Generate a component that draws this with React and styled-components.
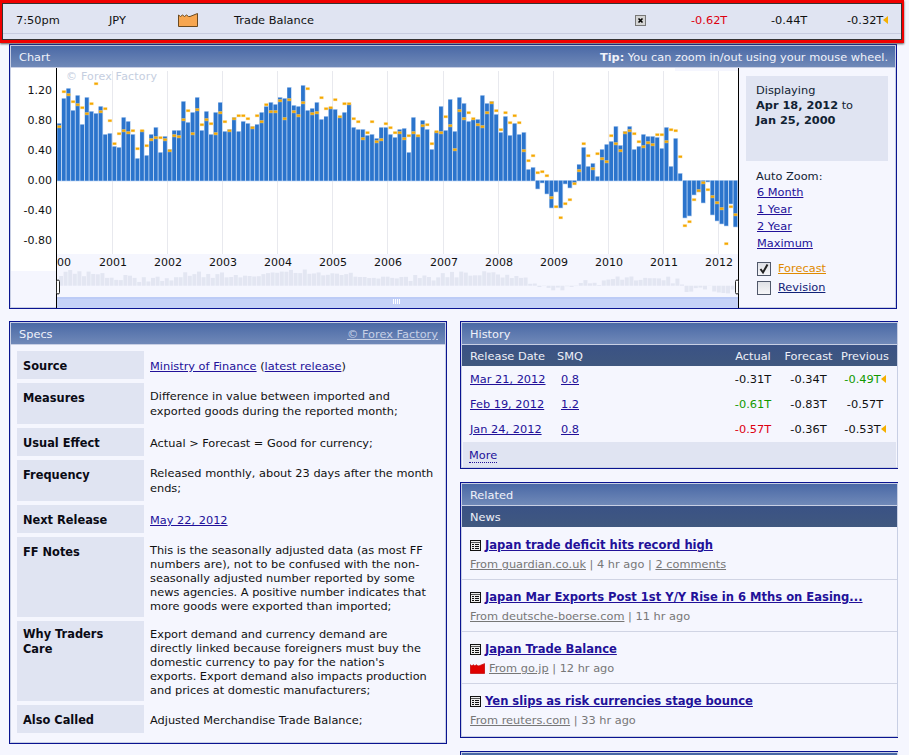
import styled, { createGlobalStyle } from "styled-components";

const GlobalStyle = createGlobalStyle`
  html, body {
    margin: 0;
    height: 755px;
    overflow: hidden;
    background: #f5f6fe;
    font-family: "DejaVu Sans", Verdana, sans-serif;
    font-size: 11.35px;
    color: #111;
  }
  b { font-size: 11.35px; }
`;

// pixels above the zero line, one per month
const actual = [57,82,92,70,85,56,83,69,67,74,46,47,34,33,63,59,46,22,50,25,46,53,28,44,31,50,50,79,58,68,83,50,69,46,68,78,49,51,63,49,59,57,54,56,68,74,78,76,83,82,93,75,74,95,70,72,78,61,64,73,71,63,68,76,53,51,51,45,46,42,53,53,46,43,51,52,28,63,45,60,51,31,49,74,50,81,49,83,77,59,61,61,85,77,79,66,48,64,45,57,46,48,11,13,-8,-2,-13,-27,-11,-27,-3,-7,-2,16,33,14,17,4,31,36,39,54,35,49,54,31,34,46,44,44,43,32,53,14,42,7,-37,-35,-14,-11,-22,-1,-34,-40,-43,-45,-23,-46];
const forecast = [54,89,86,79,76,73,67,77,97,69,72,60,37,47,50,48,50,32,50,35,41,43,43,41,30,45,44,61,70,47,71,56,61,57,47,68,59,50,62,65,65,62,53,65,59,76,69,69,80,62,81,69,65,78,92,67,68,83,72,73,81,64,77,77,62,59,42,48,59,39,41,57,53,48,48,42,45,48,45,55,56,37,49,48,64,55,31,70,62,68,62,56,54,68,78,70,51,68,58,65,58,30,20,25,8,9,5,-17,-26,-37,-23,-19,-3,10,37,25,12,27,22,19,45,37,30,48,50,47,39,34,38,36,46,46,39,51,50,24,-45,-41,-19,-10,-2,-9,-16,-22,-28,-63,-26,-34];

const yLabels = [["1.20",90],["0.80",120],["0.40",150],["0.00",180],["-0.40",210],["-0.80",240]];
const years = [[2001,112.5],[2002,167.5],[2003,222.5],[2004,277.5],[2005,332.5],[2006,387.5],[2007,443.5],[2008,498.5],[2009,553.5],[2010,608.5],[2011,663.5],[2012,718.5]];

const Page = styled.div`
  width: 909px;
  height: 755px;
  overflow: hidden;
`;

const EventRow = styled.div`
  box-sizing: border-box;
  width: 904px;
  height: 43px;
  border: 3px solid #f00000;
  border-left-width: 2px;
  border-right-width: 2px;
  box-shadow: inset 0 0 0 1px #333, 0 1px 2px #555;
  background: linear-gradient(#e0e4f2 0 30px, #c8cce0 30px 31px, #e0e4f2 31px);
  display: grid;
  grid-template-columns: 93px 69px 56px 401px 56px 80px 76px auto;
  align-items: center;
  padding: 0 0 3px 14px;
  position: relative;
  z-index: 1;
`;

const Num = styled.span`
  color: ${(p) => p.$color || "#111"};
  white-space: nowrap;
`;

const Triangle = styled.i`
  display: inline-block;
  width: 0;
  height: 0;
  margin-left: 0;
  vertical-align: 0;
  border-top: 4px solid transparent;
  border-bottom: 4px solid transparent;
  border-right: 5px solid #f5b000;
`;

const Panel = styled.section`
  box-sizing: border-box;
  border: 1px solid #0a1490;
  border-right: ${(p) => (p.$open ? "none" : "1px solid #0a1490")};
  box-shadow: inset 0 0 0 1px #c8cfe4;
  padding: 1px;
`;

const ChartPanel = styled(Panel)`
  width: 888px;
  height: 265px;
  margin: 1px 0 0 9px;
`;

const TitleBar = styled.div`
  box-sizing: border-box;
  height: 21px;
  line-height: 21px;
  padding: 1px 7px 0 8px;
  margin-bottom: 1px;
  background: linear-gradient(#4a69a6, #7089b8);
  color: #f0f2fa;
  display: flex;
  justify-content: space-between;
  box-shadow: 0 1px 0 #c8cfe4;
  a { color: #c6d0e6; }
  b { font-weight: 700; }
`;

const SubBar = styled.div`
  box-sizing: border-box;
  height: 21px;
  line-height: 21px;
  padding: 1px 0 0 8px;
  margin-bottom: 1px;
  background: linear-gradient(#3a5285, #40587f);
  color: #eef0f8;
`;

const ChartBody = styled.div`
  display: flex;
  height: 240px;
`;

const ChartSvg = styled.svg`
  display: block;
  flex: none;
  text {
    font-family: "DejaVu Sans", Verdana, sans-serif;
    font-size: 11px;
    fill: #111;
  }
`;

const Side = styled.div`
  flex: 1;
  padding: 8px 0 0 7px;
  line-height: 15px;
  color: #123;
`;

const DisplayBox = styled.div`
  width: 142px;
  height: 85px;
  box-sizing: border-box;
  background: #e0e4f2;
  padding: 7px 10px;
  line-height: 15px;
`;

const AutoZoomLabel = styled.div`
  margin: 8px 0 1px 10px;
  line-height: 15px;
`;

const ZoomLinks = styled.div`
  margin: 0 0 8px 11px;
  display: flex;
  flex-direction: column;
  gap: 2px;
  a { line-height: 15px; width: fit-content; }
`;

const Link = styled.a`
  color: ${(p) => p.$color || "#221199"};
  text-decoration: underline;
`;

const CheckRow = styled.div`
  display: flex;
  align-items: center;
  gap: 7px;
  height: 19px;
  margin-left: 11px;
`;

const Box = styled.span`
  box-sizing: border-box;
  width: 14px;
  height: 14px;
  border: 1px solid #50586a;
  background: linear-gradient(#dfe1e6, #f6f6f8);
  display: flex;
  align-items: center;
  justify-content: center;
`;

const Columns = styled.div`
  display: grid;
  grid-template-columns: 438px 438px;
  column-gap: 13px;
  margin: 12px 0 0 9px;
  align-items: start;
`;

const RightCol = styled.div`
  display: flex;
  flex-direction: column;
  gap: 13px;
`;

const SpecList = styled.div`
  display: flex;
  flex-direction: column;
  gap: 4px;
  padding: 6px 0 9px 6px;
`;

const SpecRow = styled.div`
  display: grid;
  grid-template-columns: 127px 1fr;
  column-gap: 6px;
`;

const SpecLabel = styled.div`
  background: #e0e4f2;
  padding: ${(p) => (p.$high ? "6px" : "8px")} 6px 5px;
  line-height: 15px;
  font-weight: 700;
  font-size: 11.4px;
  color: #0a0a14;
`;

const SpecValue = styled.div`
  padding: ${(p) => (p.$multi ? "6px" : "8px")} 0 5px;
  line-height: ${(p) => (p.$tight ? "14px" : "15px")};
  padding-bottom: ${(p) => (p.$tight ? "4px" : "5px")};
  white-space: nowrap;
`;

const HistGrid = styled.div`
  box-sizing: border-box;
  display: grid;
  grid-template-columns: 87px 26px 142px 56px 55px 58px;
  padding: 1px 0 0 8px;
  height: ${(p) => p.$height}px;
  align-items: center;
  background: ${(p) => (p.$head ? "linear-gradient(#3a5285, #40587f)" : "transparent")};
  color: ${(p) => (p.$head ? "#eef0f8" : "#111")};
`;

const Cell = styled.span`
  grid-column: ${(p) => p.$col};
  text-align: ${(p) => (p.$left ? "left" : "center")};
  white-space: nowrap;
`;

const MoreBar = styled.div`
  box-sizing: border-box;
  height: 25px;
  line-height: 25px;
  margin: 1px 1px 0;
  padding: 1px 0 0 6px;
  background: #e0e4f2;
  a {
    color: #221199;
    text-decoration: none;
    border-bottom: 1px dotted #221199;
  }
`;

const NewsItem = styled.div`
  height: 52px;
  box-sizing: border-box;
  padding: 10px 0 0 8px;
  border-bottom: 1px solid ${(p) => (p.$last ? "transparent" : "#d0d4e4")};
`;

const NewsTitle = styled.div`
  display: flex;
  align-items: center;
  gap: 4px;
  height: 15px;
  line-height: 15px;
  a {
    color: #221199;
    font-weight: 700;
    font-size: 11.55px;
    text-decoration: underline;
  }
`;

const NewsMeta = styled.div`
  display: flex;
  align-items: center;
  gap: 4px;
  height: 15px;
  line-height: 15px;
  margin-top: 4px;
  color: #777;
  white-space: pre;
  a {
    color: #777;
    text-decoration: underline;
  }
`;

const NextPanel = styled(Panel)`
  height: 40px;
  background: #4a69a6;
`;

const Factory = ({ fill, stroke, width, height }) => (
  <svg width={width} height={height} viewBox="0 0 20 14">
    <path d="M.5 13.5V2l2 1.5L4.5 2l2 1.5L8.5 2l2 1.5 1.5 0 7.5-3V13.5Z" fill={fill} stroke={stroke} />
  </svg>
);

const CloseIcon = () => (
  <svg width="11" height="11" viewBox="0 0 11 11">
    <rect x=".5" y=".5" width="10" height="10" fill="#d4d4d4" stroke="#777" />
    <path d="M3.5 3.5l4 4M7.5 3.5l-4 4" stroke="#000" strokeWidth="1.6" />
  </svg>
);

const NewsIcon = () => (
  <svg width="11" height="11" viewBox="0 0 11 11">
    <rect x=".5" y=".5" width="10" height="10" fill="#eee" stroke="#111" />
    <path d="M1 2.5h9" stroke="#555" />
    <path d="M2 4.5h2M5 4.5h4M2 6.5h2M5 6.5h4M2 8.5h2M5 8.5h4" stroke="#111" />
  </svg>
);

const Chart = () => (
  <ChartSvg width="728" height="240" viewBox="11 68 728 240">
    <rect x="11" y="68" width="46" height="203" fill="#fff" />
    <rect x="57" y="68" width="681" height="186" fill="#fff" />
    <rect x="675" y="68" width="63" height="3" fill="#f5f6fe" />
    {years.map(([y, x]) => (
      <rect key={y} x={x - 0.5} y="71" width="1" height="183" fill="#e8e9ee" />
    ))}
    <text x="66" y="80" letterSpacing="0.2" style={{ fill: "#c5cee0" }}>© Forex Factory</text>
    {actual.map((h, i) => {
      const x = 57.3 + i * 4.6;
      const top = h > 0 ? 180.7 - h : 180.7;
      const size = Math.abs(h);
      return (
        <g key={i}>
          <rect x={x - 0.2} y={top - 0.6} width="4.6" height={size + 1.2} fill="#b5d0f1" />
          <rect x={x} y={top} width="3.7" height={size} fill="#2b74cc" />
        </g>
      );
    })}
    {forecast.map((h, i) => {
      const x = 57.6 + i * 4.6;
      return (
        <g key={i}>
          <rect x={x - 0.5} y={179.2 - h} width="4.4" height="3" fill="#fbd98f" opacity="0.7" />
          <rect x={x} y={179.7 - h} width="3.4" height="2" fill="#f5a800" />
        </g>
      );
    })}
    {actual.map((h, i) => (
      <rect
        key={i}
        x={59 + i * 4.6}
        y={h > 0 ? 285.7 - h * 0.17 : 285.7}
        width="4"
        height={Math.abs(h) * 0.17}
        fill="#e3e6f2"
      />
    ))}
    <rect x="57" y="297" width="681" height="11" fill="#c5d2f8" />
    <rect x="57" y="297" width="681" height="2" fill="#bccbf6" />
    <path d="M393.5 299v5M395.5 299v5M397.5 299v5M399.5 299v5" stroke="#fff" />
    {yLabels.map(([t, y]) => (
      <text key={t} x="52" y={y + 4} textAnchor="end">{t}</text>
    ))}
    <text x="57" y="266">00</text>
    {years.map(([y, x]) => (
      <text key={y} x={x + 0.5} y="266" textAnchor="middle">{y}</text>
    ))}
    <rect x="56" y="68" width="1" height="240" fill="#000" />
    <rect x="738" y="68" width="1" height="240" fill="#000" />
    <rect x="56.5" y="280" width="3" height="14" rx="1.5" fill="#fff" stroke="#222" />
    <rect x="735.5" y="280" width="3" height="14" rx="1.5" fill="#fff" stroke="#222" />
  </ChartSvg>
);

const history = [
  { date: "Mar 21, 2012", smq: "0.8", act: "-0.31T", fc: "-0.34T", prev: "-0.49T", prevColor: "#119900", tri: true },
  { date: "Feb 19, 2012", smq: "1.2", act: "-0.61T", actColor: "#119900", fc: "-0.83T", prev: "-0.57T" },
  { date: "Jan 24, 2012", smq: "0.8", act: "-0.57T", actColor: "#dd0011", fc: "-0.36T", prev: "-0.53T", tri: true },
];

const specs = [
  { label: "Measures", multi: true, text: ["Difference in value between imported and", "exported goods during the reported month;"] },
  { label: "Usual Effect", text: ["Actual > Forecast = Good for currency;"] },
  { label: "Frequency", multi: true, text: ["Released monthly, about 23 days after the month", "ends;"] },
];

const specsLong = [
  { label: "FF Notes", text: ["This is the seasonally adjusted data (as most FF", "numbers are), not to be confused with the non-", "seasonally adjusted number reported by some", "news agencies. A positive number indicates that", "more goods were exported than imported;"] },
  { label: <>Why Traders<br />Care</>, high: true, text: ["Export demand and currency demand are", "directly linked because foreigners must buy the", "domestic currency to pay for the nation's", "exports. Export demand also impacts production", "and prices at domestic manufacturers;"] },
];

const news = [
  { title: "Japan trade deficit hits record high", from: "From guardian.co.uk", rest: " | 4 hr ago | ", extra: "2 comments" },
  { title: "Japan Mar Exports Post 1st Y/Y Rise in 6 Mths on Easing...", from: "From deutsche-boerse.com", rest: " | 11 hr ago" },
  { title: "Japan Trade Balance", from: "From go.jp", rest: " | 12 hr ago", factory: true },
  { title: "Yen slips as risk currencies stage bounce", from: "From reuters.com", rest: " | 33 hr ago", last: true },
];

const Lines = ({ text }) => text.map((t, i) => <div key={i}>{t}</div>);

export default function App() {
  return (
    <Page>
      <GlobalStyle />
      <EventRow>
        <span>7:50pm</span>
        <span>JPY</span>
        <Factory fill="#f7a650" stroke="#6b4a20" width="20" height="14" />
        <span>Trade Balance</span>
        <CloseIcon />
        <Num $color="#dd0011">-0.62T</Num>
        <Num>-0.44T</Num>
        <Num>-0.32T<Triangle /></Num>
      </EventRow>

      <ChartPanel>
        <TitleBar>
          <span>Chart</span>
          <span><b>Tip:</b> You can zoom in/out using your mouse wheel.</span>
        </TitleBar>
        <ChartBody>
          <Chart />
          <Side>
            <DisplayBox>
              Displaying<br />
              <b>Apr 18, 2012</b> to<br />
              <b>Jan 25, 2000</b>
            </DisplayBox>
            <AutoZoomLabel>Auto Zoom:</AutoZoomLabel>
            <ZoomLinks>
              <Link>6 Month</Link>
              <Link>1 Year</Link>
              <Link>2 Year</Link>
              <Link>Maximum</Link>
            </ZoomLinks>
            <CheckRow>
              <Box>
                <svg width="12" height="12" viewBox="0 0 12 12">
                  <path d="M2.5 6l2.5 3.5L9.5 1.5" fill="none" stroke="#222" strokeWidth="2" />
                </svg>
              </Box>
              <Link $color="#e08a00">Forecast</Link>
            </CheckRow>
            <CheckRow>
              <Box />
              <Link $color="#112277">Revision</Link>
            </CheckRow>
          </Side>
        </ChartBody>
      </ChartPanel>

      <Columns>
        <Panel>
          <TitleBar>
            <span>Specs</span>
            <a href="#ff">© Forex Factory</a>
          </TitleBar>
          <SpecList>
            <SpecRow>
              <SpecLabel>Source</SpecLabel>
              <SpecValue>
                <Link>Ministry of Finance</Link> (<Link>latest release</Link>)
              </SpecValue>
            </SpecRow>
            {specs.map((s) => (
              <SpecRow key={s.label}>
                <SpecLabel>{s.label}</SpecLabel>
                <SpecValue $multi={s.multi}><Lines text={s.text} /></SpecValue>
              </SpecRow>
            ))}
            <SpecRow>
              <SpecLabel>Next Release</SpecLabel>
              <SpecValue><Link>May 22, 2012</Link></SpecValue>
            </SpecRow>
            {specsLong.map((s, i) => (
              <SpecRow key={i}>
                <SpecLabel $high={s.high}>{s.label}</SpecLabel>
                <SpecValue $multi $tight><Lines text={s.text} /></SpecValue>
              </SpecRow>
            ))}
            <SpecRow>
              <SpecLabel>Also Called</SpecLabel>
              <SpecValue>Adjusted Merchandise Trade Balance;</SpecValue>
            </SpecRow>
          </SpecList>
        </Panel>

        <RightCol>
          <Panel $open>
            <TitleBar><span>History</span></TitleBar>
            <HistGrid $head $height={21}>
              <Cell $col={1} $left>Release Date</Cell>
              <Cell $col={2}>SMQ</Cell>
              <Cell $col={4}>Actual</Cell>
              <Cell $col={5}>Forecast</Cell>
              <Cell $col={6}>Previous</Cell>
            </HistGrid>
            {history.map((r) => (
              <HistGrid key={r.date} $height={25}>
                <Cell $col={1} $left><Link>{r.date}</Link></Cell>
                <Cell $col={2}><Link>{r.smq}</Link></Cell>
                <Cell $col={4}><Num $color={r.actColor}>{r.act}</Num></Cell>
                <Cell $col={5}>{r.fc}</Cell>
                <Cell $col={6}>
                  <Num $color={r.prevColor}>{r.prev}</Num>
                  {r.tri && <Triangle />}
                </Cell>
              </HistGrid>
            ))}
            <MoreBar><a href="#more">More</a></MoreBar>
          </Panel>

          <Panel $open>
            <TitleBar><span>Related</span></TitleBar>
            <SubBar>News</SubBar>
            {news.map((n) => (
              <NewsItem key={n.title} $last={n.last}>
                <NewsTitle>
                  <NewsIcon />
                  <a href="#news">{n.title}</a>
                </NewsTitle>
                <NewsMeta>
                  {n.factory && <Factory fill="#e00000" stroke="#c00000" width="15" height="11" />}
                  <span>
                    <a href="#src">{n.from}</a>{n.rest}
                    {n.extra && <a href="#c">{n.extra}</a>}
                  </span>
                </NewsMeta>
              </NewsItem>
            ))}
          </Panel>

          <NextPanel $open />
        </RightCol>
      </Columns>
    </Page>
  );
}
